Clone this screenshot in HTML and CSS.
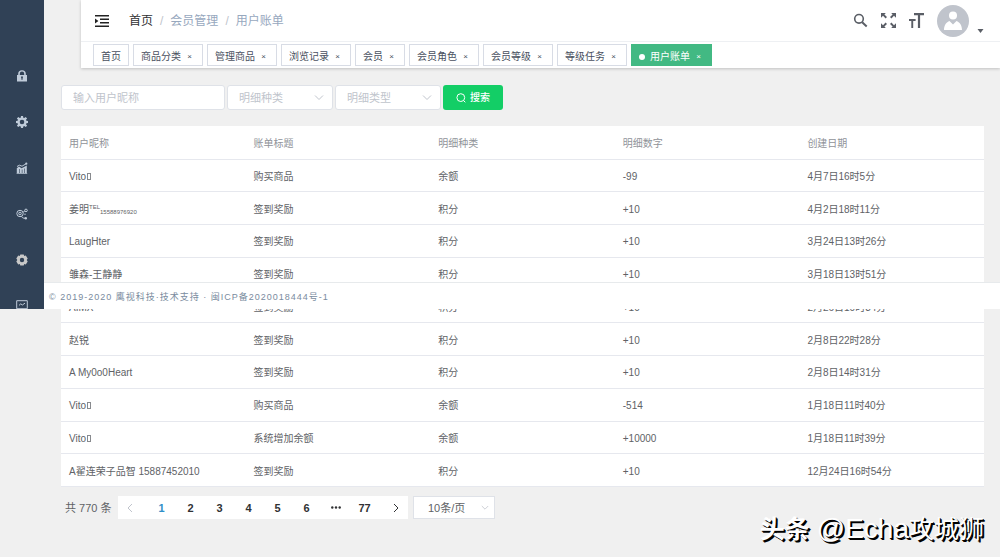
FILE: index.html
```html
<!DOCTYPE html>
<html lang="zh-CN">
<head>
<meta charset="utf-8">
<title>用户账单</title>
<meta name="viewport" content="width=device-width, initial-scale=1">
<link rel="stylesheet" href="styles.css">
</head>
<body>
<div class="app">
  <nav class="sidebar" aria-label="主菜单">
    <a class="side-link" href="#" aria-label="权限"><svg viewBox="0 0 12 12"><path d="M1 5h10v6.500H1zM2.200 5V3.700a3.800 3.500 0 0 1 7.600 0V5H8.200V3.700a2.200 2.100 0 0 0-4.400 0V5z"/><path class="hole" d="M6 6.300a1 1 0 0 1 .6 1.800v1.600H5.400V8.100A1 1 0 0 1 6 6.300z"/></svg></a>
    <a class="side-link" href="#" aria-label="设置"><svg viewBox="0 0 12 12"><path fill-rule="evenodd" d="M5 0h2l.3 1.700 1 .4L9.700 1l1.400 1.400-1.100 1.400.4 1L12 5v2l-1.600.3-.4 1 1.100 1.400L9.700 11l-1.400-1-1 .4L7 12H5l-.3-1.600-1-.4-1.400 1L.9 9.700 2 8.300l-.4-1L0 7V5l1.600-.2.4-1L.9 2.400 2.300 1l1.400 1.100 1-.4zM6 3.700a2.300 2.300 0 1 0 0 4.600 2.300 2.300 0 0 0 0-4.600z"/></svg></a>
    <a class="side-link" href="#" aria-label="统计"><svg viewBox="0 0 12 12"><path d="M.8 6.200L3 4.600 5.500 6.200 8 5l2.800-1.500V11H.8zM.6 11h10.600v.8H.6z"/><path class="line" d="M1 4.500l2.400-1.300L6 4.200l4.300-2.500"/><circle cx="10.300" cy="1.700" r="1.100"/><path class="hole" d="M3.200 7h.6v4h-.6zM5.800 7.500h.6V11h-.6zM8.300 6.500h.6V11h-.6z"/></svg></a>
    <a class="side-link" href="#" aria-label="分销"><svg viewBox="0 0 12 12"><g class="line"><circle cx="4" cy="5.500" r="3.200"/><circle cx="4" cy="5.500" r="1.300"/><circle cx="10" cy="2.400" r="1.300"/><path d="M7 4.300l1.800-1.200M5.500 8.400c1 1.800 2 1.800 3.500 1.800"/></g><circle cx="9.800" cy="10.200" r="1.200"/><circle cx="9" cy="6.300" r=".7"/></svg></a>
    <a class="side-link warm" href="#" aria-label="系统"><svg viewBox="0 0 12 12"><path fill-rule="evenodd" d="M4.300.4h3.400l.5 1.500 1.600-.3 1.900 3L10.700 6l1 1.400-1.900 3-1.600-.3-.5 1.500H4.300l-.5-1.500-1.600.3-1.900-3L1.300 6 .3 4.600l1.900-3 1.600.3zM6 3.800a2.200 2.200 0 1 0 0 4.400 2.200 2.200 0 0 0 0-4.400z"/></svg></a>
    <a class="side-link" href="#" aria-label="监控"><svg viewBox="0 0 12 12"><g class="line"><path d="M.7.700h10.600v8H.7zM3 5.400l1.800-1.600 1.500 1.200L9 3.200M6 8.700V11M3 11.500h6"/></g></svg></a>
  </nav>

  <div class="main">
    <header class="header">
      <div class="navbar">
        <button class="icon-btn" type="button" aria-label="折叠菜单"><svg class="menu-icon" viewBox="0 0 14 12"><path d="M0 0h14v1.600H0zM5 3.500h9v1.600H5zM5 6.900h9v1.600H5zM0 10.400h14V12H0zM0 3.400v5.200L3.400 6z"/></svg></button>
        <nav class="breadcrumb" aria-label="面包屑"><a href="#">首页</a><i>/</i><span>会员管理</span><i>/</i><span>用户账单</span></nav>
        <div class="tools">
          <button class="icon-btn" type="button" aria-label="搜索"><svg class="tool-icon" viewBox="0 0 15 15"><circle cx="6" cy="5.800" r="4.300" fill="none" stroke="#5a5e66" stroke-width="1.600"/><path d="M9.200 9.200l4.500 4.200" stroke="#5a5e66" stroke-width="2"/></svg></button>
          <button class="icon-btn" type="button" aria-label="全屏"><svg class="tool-icon" viewBox="0 0 15 15"><path d="M0 0h4.800L3.400 1.400 6 4 4.600 5.400 2 2.800 0 4.800z"/><path d="M15 0v4.800l-2-2-2.600 2.600L9 4l2.600-2.600L10.200 0zM0 15v-4.800l2 2 2.600-2.600L6 11l-2.600 2.600L4.800 15zM15 15h-4.800l1.400-1.400L9 11l1.400-1.400 2.600 2.600 2-2z"/></svg></button>
          <button class="icon-btn" type="button" aria-label="字号"><svg class="tool-icon" viewBox="0 0 15 15"><path d="M5 0h10v2.200h-3.900V15H8.900V2.200H5zM0 6h6.600v1.900H4.200V15H2.300V7.900H0z"/></svg></button>
          <button class="icon-btn user" type="button" aria-label="用户"><svg class="avatar" viewBox="0 0 32 32"><circle cx="16" cy="16" r="16" fill="#c0c4cc"/><circle cx="16" cy="10.500" r="4" fill="#fff"/><path d="M7 25c0-5 2.500-8 5.500-9l3.500 3.500 3.500-3.500c3 1 5.500 4 5.500 9z" fill="#fff"/></svg><svg class="caret" viewBox="0 0 6 4"><path d="M0 0h6L3 4z"/></svg></button>
        </div>
      </div>
      <div class="tags">
        <a class="tag" href="#">首页</a>
        <a class="tag" href="#">商品分类<b>×</b></a>
        <a class="tag" href="#">管理商品<b>×</b></a>
        <a class="tag" href="#">浏览记录<b>×</b></a>
        <a class="tag" href="#">会员<b>×</b></a>
        <a class="tag" href="#">会员角色<b>×</b></a>
        <a class="tag" href="#">会员等级<b>×</b></a>
        <a class="tag" href="#">等级任务<b>×</b></a>
        <a class="tag active" href="#">用户账单<b>×</b></a>
      </div>
    </header>

    <main class="content">
      <form class="filters">
        <input class="field" type="text" placeholder="输入用户昵称" aria-label="输入用户昵称">
        <span class="select"><select aria-label="明细种类"><option>明细种类</option></select><svg viewBox="0 0 10 6"><path d="M1 .5l4 4 4-4"/></svg></span>
        <span class="select"><select aria-label="明细类型"><option>明细类型</option></select><svg viewBox="0 0 10 6"><path d="M1 .5l4 4 4-4"/></svg></span>
        <button class="search" type="button"><svg viewBox="0 0 10 10"><circle cx="4.800" cy="4.600" r="3.900"/><path d="M7.500 7.500l1.800 1.800"/></svg>搜索</button>
      </form>

      <table class="bills">
        <thead><tr><th>用户昵称</th><th>账单标题</th><th>明细种类</th><th>明细数字</th><th>创建日期</th></tr></thead>
        <tbody>
          <tr><td>Vito<span class="tofu"></span></td><td>购买商品</td><td>余额</td><td>-99</td><td>4月7日16时5分</td></tr>
          <tr><td>姜明<sup>TEL</sup><sub>15588976920</sub></td><td>签到奖励</td><td>积分</td><td>+10</td><td>4月2日18时11分</td></tr>
          <tr><td>LaugHter</td><td>签到奖励</td><td>积分</td><td>+10</td><td>3月24日13时26分</td></tr>
          <tr><td>雏森-王静静</td><td>签到奖励</td><td>积分</td><td>+10</td><td>3月18日13时51分</td></tr>
          <tr><td>AIMX</td><td>签到奖励</td><td>积分</td><td>+10</td><td>2月26日10时34分</td></tr>
          <tr><td>赵锐</td><td>签到奖励</td><td>积分</td><td>+10</td><td>2月8日22时28分</td></tr>
          <tr><td>A My0o0Heart</td><td>签到奖励</td><td>积分</td><td>+10</td><td>2月8日14时31分</td></tr>
          <tr><td>Vito<span class="tofu"></span></td><td>购买商品</td><td>余额</td><td>-514</td><td>1月18日11时40分</td></tr>
          <tr><td>Vito<span class="tofu"></span></td><td>系统增加余额</td><td>余额</td><td>+10000</td><td>1月18日11时39分</td></tr>
          <tr><td>A翟连荣子品智 15887452010</td><td>签到奖励</td><td>积分</td><td>+10</td><td>12月24日16时54分</td></tr>
        </tbody>
      </table>

      <div class="pagination">
        <span class="total">共 770 条</span>
        <div class="pager">
          <button class="step" type="button" aria-label="上一页" disabled><svg viewBox="0 0 6 10"><path d="M5 1L1 5l4 4"/></svg></button>
          <button class="current" type="button">1</button>
          <button type="button">2</button>
          <button type="button">3</button>
          <button type="button">4</button>
          <button type="button">5</button>
          <button type="button">6</button>
          <button type="button" aria-label="更多页"><svg class="dots" viewBox="0 0 10 3"><circle cx="1.300" cy="1.500" r="1.200"/><circle cx="5" cy="1.500" r="1.200"/><circle cx="8.700" cy="1.500" r="1.200"/></svg></button>
          <button type="button">77</button>
          <button class="step" type="button" aria-label="下一页"><svg viewBox="0 0 6 10"><path d="M1 1l4 4-4 4"/></svg></button>
        </div>
        <span class="select size"><select aria-label="每页条数"><option>10条/页</option></select><svg viewBox="0 0 10 6"><path d="M1 .5l4 4 4-4"/></svg></span>
      </div>
    </main>
  </div>

  <footer class="footer">© 2019-2020 鹰视科技·技术支持 · 闽ICP备2020018444号-1</footer>
  <div class="watermark"><b>头条</b> <span>@Echa</span>攻城狮</div>
</div>
</body>
</html>
```
FILE: styles.css
```css
* { box-sizing: border-box; }

body {
  margin: 0;
  background: #f0f0f0;
  color: #606266;
  font: 10px/16px "Liberation Sans", "Noto Sans CJK SC", sans-serif;
}

button, input, select {
  margin: 0;
  font: inherit;
  color: inherit;
}

button { border: 0; background: none; padding: 0; cursor: pointer; }
a { color: inherit; text-decoration: none; }
svg { display: block; }

.app {
  position: relative;
  display: grid;
  grid-template-columns: 44px minmax(0, 1fr);
  min-height: 100vh;
}

/* Sidebar */
.sidebar {
  align-self: start;
  height: 309px;
  padding-top: 53px;
  overflow: hidden;
  background: #304156;
}

.side-link {
  display: grid;
  place-items: center;
  height: 46px;
}

.side-link svg { width: 12px; height: 12px; fill: #bfcbd9; }
.side-link.warm svg { fill: #c8c8c8; }
.side-link .hole { fill: #304156; }
.side-link .line { fill: none; stroke: #bfcbd9; stroke-width: 1; }

/* Header */
.header {
  margin-left: 37px;
  background: #fff;
  box-shadow: 0 1px 3px rgba(0, 0, 0, .2);
}

.navbar {
  display: flex;
  align-items: center;
  height: 42px;
  padding: 0 16px 0 14px;
  border-bottom: 1px solid #eef0f3;
}

.menu-icon { width: 14px; height: 12px; fill: #222; }

.breadcrumb {
  margin-left: 20px;
  font-size: 12px;
  color: #97a8be;
}

.breadcrumb a { color: #303133; }
.breadcrumb i { margin: 0 7px; font-style: normal; color: #c0c4cc; }

.tools {
  display: flex;
  align-items: center;
  gap: 13px;
  margin-left: auto;
}

.tool-icon { width: 15px; height: 15px; fill: #5a5e66; }
.user { display: flex; align-items: flex-end; gap: 8px; }
.avatar { width: 32px; height: 32px; }
.caret { width: 7px; height: 4px; margin-bottom: 4px; fill: #5a5e66; }

.tags {
  display: flex;
  gap: 4px;
  padding: 2px 12px;
}

.tag {
  display: flex;
  align-items: center;
  height: 22px;
  padding: 3px 7px 0;
  border: 1px solid #d8dce5;
  background: #fff;
  color: #495060;
}

.tag b {
  width: 11px;
  margin-left: 3px;
  font-size: 8px;
  font-weight: 400;
  text-align: center;
}

.tag.active {
  border-color: #42b983;
  background: #42b983;
  color: #fff;
}

.tag.active::before {
  content: "";
  width: 6px;
  height: 6px;
  margin-right: 5px;
  border-radius: 50%;
  background: #fff;
}

/* Content */
.content { padding: 17px 16px 0 17px; }

.filters {
  display: flex;
  gap: 2px;
  margin-bottom: 16px;
}

.field, .select select {
  height: 25px;
  border: 1px solid #dfe2e8;
  border-radius: 3px;
  background: #fff;
  font-size: 11px;
  outline: 0;
}

.field { width: 164px; padding: 0 11px; }
.field::placeholder { color: #c0c4cc; opacity: 1; }

.select { display: grid; align-items: center; }
.select select, .select svg { grid-area: 1 / 1; }

.select select {
  width: 106px;
  padding: 0 11px;
  appearance: none;
  color: #c0c4cc;
}

.select svg {
  justify-self: end;
  width: 10px;
  height: 6px;
  margin-right: 9px;
  fill: none;
  stroke: #c0c4cc;
  pointer-events: none;
}

.search {
  display: flex;
  align-items: center;
  justify-content: center;
  gap: 4px;
  width: 60px;
  height: 25px;
  border-radius: 3px;
  background: #13ce66;
  color: #fff;
  font-weight: 500;
}

.search svg { width: 10px; height: 10px; fill: none; stroke: #fff; }

.bills {
  width: 100%;
  height: 361px;
  border-collapse: collapse;
  table-layout: fixed;
  background: #fff;
}

.bills th, .bills td {
  padding: 3px 8px 0;
  border-bottom: 1px solid #e6e8ee;
  font-weight: 400;
  text-align: left;
  white-space: nowrap;
}

.bills th { height: 33px; color: #909399; }
.bills sup, .bills sub { font-size: 6px; line-height: 0; }
.bills sub { vertical-align: -1px; }

.tofu {
  display: inline-block;
  width: 4px;
  height: 7px;
  margin-left: 1px;
  border: 1px solid #888a8e;
}

/* Pagination */
.pagination {
  display: flex;
  align-items: center;
  margin-top: 9px;
  padding-left: 4px;
  font-size: 11px;
}

.total { width: 53px; }

.pager {
  display: flex;
  height: 23px;
  background: #fff;
  color: #303133;
  font-weight: 700;
}

.pager button {
  display: grid;
  place-items: center;
  width: 29px;
}

.pager .current { color: #2f8fc8; }
.pager .step:first-child { padding-right: 5px; }
.pager .step:last-child { padding-left: 5px; }
.pager .step svg { width: 6px; height: 10px; fill: none; stroke: #303133; }
.pager .step:disabled svg { stroke: #c0c4cc; }
.pager .dots { width: 10px; height: 3px; fill: #303133; }

.size { margin-left: 5px; }

.select.size select {
  width: 82px;
  height: 23px;
  padding: 0 14px;
  border-radius: 0;
  color: #606266;
}

.select.size svg { width: 8px; margin-right: 6px; }

/* Layers over the page */
.footer {
  position: absolute;
  top: 282px;
  left: 44px;
  right: 0;
  padding: 6px 5px 4px;
  border-top: 1px solid #e7eaec;
  background: #fff;
  color: #7a8b9e;
  font-size: 9px;
  letter-spacing: 1px;
}

.watermark {
  position: absolute;
  right: 16px;
  bottom: 10px;
  color: #fff;
  font-size: 25px;
  line-height: 36px;
  text-shadow: 1px 1px 0 #000, 2px 2px 0 #000;
  white-space: nowrap;
}

.watermark span { font-size: 28px; }
```
